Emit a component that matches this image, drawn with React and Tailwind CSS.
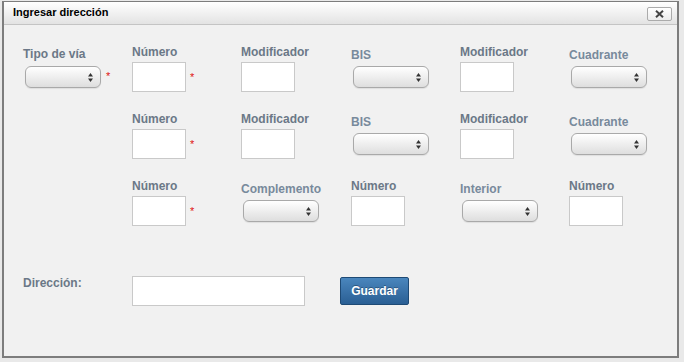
const FONT = { fontFamily: '"Liberation Sans", Arial, sans-serif' };

function Star({ className }) {
  return (
    <span className={`text-[11px] leading-none text-[#e01010] ${className}`}>*</span>
  );
}

function Arrows() {
  return (
    <svg width="5" height="9" viewBox="0 0 5 9" className="fill-[#333]">
      <polygon points="0,3.6 2.5,0 5,3.6" />
      <polygon points="0,5.4 2.5,9 5,5.4" />
    </svg>
  );
}

function Select() {
  return (
    <div className="ml-[2px] flex h-[22px] w-[76px] items-center justify-end rounded-[6px] border border-[#a9a9a9] bg-gradient-to-b from-white to-[#dedede] pr-[7px] shadow-[0_1px_1px_rgba(0,0,0,0.08)]">
      <Arrows />
    </div>
  );
}

function TextBox({ w = "w-[54px]" }) {
  return <div className={`h-[30px] ${w} border border-[#c9c9c9] bg-white`} />;
}

function InputField({ label, required }) {
  return (
    <div className="flex flex-col">
      <span className="h-[14px] text-[12px] font-bold leading-[14px] text-[#6b7887]">{label}</span>
      <div className="mt-[3px] flex items-start">
        <TextBox />
        {required && <Star className="ml-[4px] mt-[10px]" />}
      </div>
    </div>
  );
}

function SelectField({ label }) {
  return (
    <div className="flex flex-col">
      <span className="box-content h-[14px] pt-[3px] text-[12px] font-bold leading-[14px] text-[#788a9c]">{label}</span>
      <div className="mt-[4px]">
        <Select />
      </div>
    </div>
  );
}

export default function App() {
  return (
    <div className="min-h-screen bg-[#e9e9e9] pl-[2px] pt-[1px]" style={FONT}>
      <div className="flex h-[357px] w-[677px] flex-col border-2 border-t border-[#7d7d7d] bg-[#f1f1f1]">
        <div className="flex h-[23px] items-start justify-between border-b border-[#c4c4c4] bg-gradient-to-b from-white to-[#e3e3e3] pl-[9px] pr-[5px]">
          <span className="mt-[4px] text-[11px] font-bold leading-[13px] text-black">Ingresar dirección</span>
          <button className="mt-[5px] flex h-[14px] w-[25px] items-center justify-center rounded-[2px] border border-[#ababab] bg-gradient-to-b from-white to-[#ececec]">
            <svg width="9" height="8" viewBox="0 0 9 8" className="stroke-[#444]">
              <path d="M1 0.8 L8 7.2 M8 0.8 L1 7.2" strokeWidth="2" />
            </svg>
          </button>
        </div>

        <div className="flex-1 pl-[19px] pt-[20px]">
          <div className="grid grid-cols-[109px_109px_110px_109px_109px_109px] gap-y-[20px]">
            <div className="flex flex-col">
              <span className="box-content h-[14px] pt-[2px] text-[12px] font-bold leading-[14px] text-[#6b7887]">Tipo de vía</span>
              <div className="mt-[5px] flex items-start">
                <Select />
                <Star className="ml-[5px] mt-[5px]" />
              </div>
            </div>
            <InputField label="Número" required />
            <InputField label="Modificador" />
            <SelectField label="BIS" />
            <InputField label="Modificador" />
            <SelectField label="Cuadrante" />

            <div />
            <InputField label="Número" required />
            <InputField label="Modificador" />
            <SelectField label="BIS" />
            <InputField label="Modificador" />
            <SelectField label="Cuadrante" />

            <div />
            <InputField label="Número" required />
            <SelectField label="Complemento" />
            <InputField label="Número" />
            <SelectField label="Interior" />
            <InputField label="Número" />
          </div>

          <div className="mt-[50px] flex items-start">
            <span className="w-[109px] text-[12px] font-bold leading-[14px] text-[#6b7887]">Dirección:</span>
            <TextBox w="w-[173px]" />
            <button className="ml-[35px] mt-[1px] h-[28px] w-[69px] rounded-[2px] border border-[#1e4a75] bg-gradient-to-b from-[#4a86bd] to-[#2a5f94] text-[12px] font-bold text-white [text-shadow:0_-1px_0_rgba(0,0,0,0.3)]">
              Guardar
            </button>
          </div>
        </div>
      </div>
    </div>
  );
}
